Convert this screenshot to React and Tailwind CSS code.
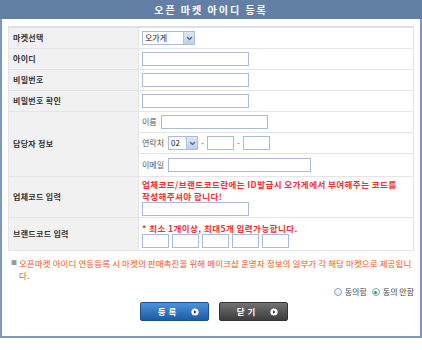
import React from 'react';

const font = "font-['Noto_Sans_CJK_KR','Noto_Sans',sans-serif]";

function TextBox({ className = '' }) {
  return <div className={`h-[14px] border border-[#a9bcd6] bg-white ${className}`} />;
}

function SelectBox({ value, width }) {
  return (
    <div className={`h-[14px] ${width} flex items-center border border-[#a9bcd6] bg-white`}>
      <span className="flex-1 pl-[2px] text-[8px] leading-none text-[#222]">{value}</span>
      <span className="w-[11px] h-[12px] bg-gradient-to-b from-[#dfe9f7] to-[#bccfea] border-l border-[#b4c6df] flex items-center justify-center">
        <svg width="7" height="5" viewBox="0 0 7 5">
          <path d="M1 1 L3.5 3.5 L6 1" fill="none" stroke="#4d6a96" strokeWidth="1.3" />
        </svg>
      </span>
    </div>
  );
}

function Row({ label, height, children, valueClass = 'flex items-center px-[3px]' }) {
  return (
    <div className={`flex ${height} border-b border-[#e4e4e4]`}>
      <div className="w-[130px] shrink-0 bg-[#f1f1f1] border-r border-[#e4e4e4] flex items-center pl-[4px] text-[8px] font-bold text-[#333] tracking-[0.3px]">
        {label}
      </div>
      <div className={`flex-1 ${valueClass}`}>{children}</div>
    </div>
  );
}

function PlayDot() {
  return (
    <svg width="8" height="8" viewBox="0 0 8 8">
      <circle cx="4" cy="4" r="3.6" fill="#fff" />
      <path d="M3 2.2 L5.6 4 L3 5.8 Z" fill="#333" />
    </svg>
  );
}

export default function App() {
  return (
    <div className={`w-[422px] h-[350px] bg-white ${font}`}>
      <div className="h-[19px] bg-[#627fa6] flex items-center justify-center text-white text-[10px] font-bold tracking-[2px]">
        오픈 마켓 아이디 등록
      </div>
      <div className="h-[319px] border-l-[2px] border-r-[2px] border-b-[2px] border-[#7e98bc] px-[6px] pt-[7px]">
        <div className="border-t-[2px] border-t-[#e0e0e0] border-x border-[#e4e4e4]">
          <Row label="마켓선택" height="h-[21px]">
            <SelectBox value="오가게" width="w-[53px]" />
          </Row>
          <Row label="아이디" height="h-[21px]">
            <TextBox className="w-[107px]" />
          </Row>
          <Row label="비밀번호" height="h-[21px]">
            <TextBox className="w-[107px]" />
          </Row>
          <Row label="비밀번호 확인" height="h-[21px]">
            <TextBox className="w-[107px]" />
          </Row>
          <Row label="담당자 정보" height="h-[65px]" valueClass="flex flex-col">
            <div className="h-[21px] border-b border-[#e4e4e4] flex items-center px-[3px] gap-[4px] text-[8px] text-[#555]">
              <span>이름</span>
              <TextBox className="w-[107px]" />
            </div>
            <div className="h-[21px] border-b border-[#e4e4e4] flex items-center px-[3px] text-[8px] text-[#555]">
              <span className="mr-[4px]">연락처</span>
              <SelectBox value="02" width="w-[30px]" />
              <span className="mx-[3px]">-</span>
              <TextBox className="w-[27px]" />
              <span className="mx-[3px]">-</span>
              <TextBox className="w-[27px]" />
            </div>
            <div className="flex-1 flex items-center px-[3px] gap-[4px] text-[8px] text-[#555]">
              <span>이메일</span>
              <TextBox className="w-[143px]" />
            </div>
          </Row>
          <Row label="업체코드 입력" height="h-[41px]" valueClass="px-[3px] pt-[1px]">
            <p className="text-[8.5px] leading-[12px] font-bold tracking-[0.45px] text-[#f52d2d] whitespace-nowrap">
              업체코드/브랜드코드란에는 ID발급시 오가게에서 부여해주는 코드를
              <br />
              작성해주셔야 합니다!
            </p>
            <TextBox className="w-[107px]" />
          </Row>
          <Row label="브랜드코드 입력" height="h-[33px]" valueClass="px-[3px] pt-[4px]">
            <p className="text-[8.5px] leading-[12px] font-bold tracking-[0.45px] text-[#f52d2d]">* 최소 1개이상, 최대5개 입력가능합니다.</p>
            <div className="flex gap-[3px]">
              <TextBox className="w-[27px]" />
              <TextBox className="w-[27px]" />
              <TextBox className="w-[27px]" />
              <TextBox className="w-[27px]" />
              <TextBox className="w-[27px]" />
            </div>
          </Row>
        </div>

        <div className="mt-[6px] flex text-[8.5px] leading-[12px] tracking-[0.1px] text-[#f0541e]">
          <span className="w-[11px] pl-[3px] text-[#999] text-[6px]">■</span>
          <p>
            <span className="whitespace-nowrap">오픈마켓 아이디 연동등록 시 마켓의 판매촉진을 위해 메이크샵 운영자 정보의 일부가 각 해당 마켓으로 제공됩니</span>
            <br />
            다.
          </p>
        </div>

        <div className="mt-[5px] flex justify-end items-center gap-[3px] text-[8px] text-[#444]">
          <span className="w-[8px] h-[8px] rounded-full border border-[#8aa0bf] bg-gradient-to-b from-white to-[#dde6f2]" />
          <span className="mr-[2px]">동의함</span>
          <span className="w-[8px] h-[8px] rounded-full border border-[#8aa0bf] bg-gradient-to-b from-white to-[#dde6f2] flex items-center justify-center">
            <span className="w-[3px] h-[3px] rounded-full bg-[#3aa33a]" />
          </span>
          <span>동의 안함</span>
        </div>

        <div className="mt-[4px] flex justify-center gap-[10px] pl-[6px]">
          <button className="w-[69px] h-[19px] rounded-[2px] border border-[#1c4f8c] bg-gradient-to-b from-[#4d93d8] to-[#1c5ca6] flex items-center justify-center gap-[12px] text-white text-[8.5px] font-bold tracking-[3px]">
            <span className="pl-[8px]">등록</span>
            <PlayDot />
          </button>
          <button className="w-[69px] h-[19px] rounded-[2px] border border-[#333] bg-gradient-to-b from-[#727272] to-[#3d3d3d] flex items-center justify-center gap-[12px] text-white text-[8.5px] font-bold tracking-[3px]">
            <span className="pl-[8px]">닫기</span>
            <PlayDot />
          </button>
        </div>
      </div>
    </div>
  );
}
